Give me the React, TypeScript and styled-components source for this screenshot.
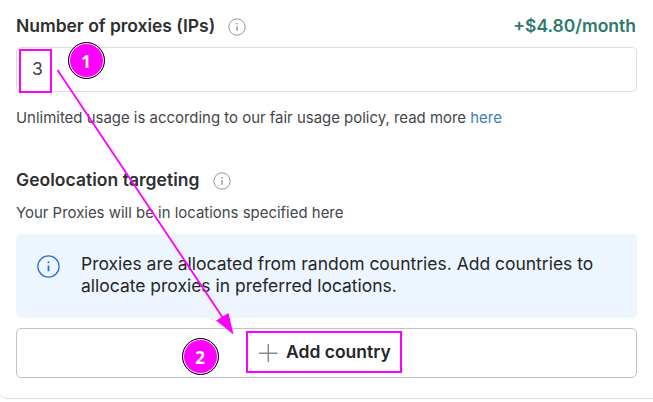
import React from "react";
import styled, { createGlobalStyle } from "styled-components";

const GlobalStyle = createGlobalStyle`
  *, *::before, *::after { box-sizing: border-box; }
  html, body { margin: 0; background: #fff; }
  body { font-family: Inter, "Liberation Sans", sans-serif; overflow: hidden; }
`;

const Page = styled.main`
  position: relative;
  width: 653px;
  height: 402px;
  overflow: hidden;
  background: #fff;
`;

const Card = styled.section`
  display: flex;
  flex-direction: column;
  width: 673px;
  height: 399px;
  margin-left: -1px;
  padding: 15px 36px 0 17px;
  border-bottom: 1px solid #dcdddf;
  border-radius: 0 0 8px 8px;
`;

const Header = styled.div`
  display: flex;
  align-items: center;
  height: 22px;
  gap: 13px;
`;

const Heading = styled.h2<{ $spacing: number }>`
  margin: 0;
  font-size: 17.5px;
  line-height: 22px;
  font-weight: 600;
  letter-spacing: ${(p) => p.$spacing}px;
  color: #2e2f31;
  white-space: nowrap;
`;

const Price = styled.span`
  margin-left: auto;
  font-size: 17.5px;
  line-height: 22px;
  font-weight: 600;
  color: #2d7a6b;
  white-space: nowrap;
`;

const NumberField = styled.input`
  display: block;
  width: 621px;
  height: 45px;
  margin: 10px 0 0;
  padding: 0 15px 3px;
  border: 1px solid #dddedf;
  border-radius: 5px;
  outline: none;
  background: #fff;
  color: #444649;
  font: 400 17.5px Inter, sans-serif;
`;

const Note = styled.p<{ $top: number }>`
  margin: ${(p) => p.$top}px 0 0;
  font-size: 14.94px;
  line-height: 20px;
  color: #444649;
  white-space: nowrap;
`;

const Link = styled.a`
  color: #427cbd;
  text-decoration: none;
`;

const Geolocation = styled.section`
  margin-top: 41px;
`;

const Alert = styled.div`
  display: flex;
  width: 621px;
  height: 84px;
  margin-top: 11px;
  padding: 20px 20px;
  gap: 20px;
  border-radius: 5px;
  background: #edf5ff;
`;

const AlertText = styled.p`
  margin: -1px 0 0;
  font-size: 17.48px;
  line-height: 22px;
  color: #242629;
  white-space: nowrap;
`;

const AddButton = styled.button`
  display: flex;
  align-items: center;
  width: 621px;
  height: 50px;
  margin-top: 10px;
  padding: 0 0 4px 241px;
  gap: 8px;
  border: 1px solid #c0c3cb;
  border-radius: 5px;
  background: #fff;
  color: #242629;
  font: 600 17.5px Inter, sans-serif;
  white-space: nowrap;
`;

const Annotations = styled.svg`
  position: absolute;
  inset: 0;
  pointer-events: none;
`;

const Marker = styled.span<{ $x: number; $y: number }>`
  position: absolute;
  left: ${(p) => p.$x}px;
  top: ${(p) => p.$y}px;
  display: flex;
  align-items: center;
  justify-content: center;
  width: 37px;
  height: 37px;
  padding-top: 1px;
  border: 1px solid #000;
  border-radius: 50%;
  background: #ff00ff;
  box-shadow: inset 0 0 0 1px #fff;
  color: #fff;
  font: 700 17px "Open Sans", sans-serif;
`;

const InfoSmall = styled.svg`
  flex: none;
  margin-top: 1px;
`;

const AlertIcon = styled.svg`
  flex: none;
`;

const PlusIcon = styled.svg`
  flex: none;
  margin-top: 4px;
`;

function Info() {
  return (
    <InfoSmall width="18" height="18" viewBox="0 0 18 18" fill="none">
      <circle cx="9" cy="9" r="8.2" stroke="#92979e" />
      <path d="M9 8.2v4.6" stroke="#85898f" strokeWidth="1.3" />
      <circle cx="9" cy="5.7" r=".8" fill="#85898f" />
    </InfoSmall>
  );
}

export default function App() {
  return (
    <Page>
      <GlobalStyle />
      <Card>
        <Header>
          <Heading $spacing={-0.035}>Number of proxies (IPs)</Heading>
          <Info />
          <Price>+$4.80/month</Price>
        </Header>
        <NumberField defaultValue="3" aria-label="Number of proxies" />
        <Note $top={16}>
          Unlimited usage is according to our fair usage policy, read more <Link href="#">here</Link>
        </Note>
        <Geolocation>
          <Header>
            <Heading $spacing={0.03}>Geolocation targeting</Heading>
            <Info />
          </Header>
          <Note $top={12}>Your Proxies will be in locations specified here</Note>
          <Alert>
            <AlertIcon width="25" height="25" viewBox="0 0 25 25" fill="none">
              <circle cx="12.5" cy="12.5" r="10.6" stroke="#2c6fdc" strokeWidth="1.3" />
              <path d="M12.5 11.5v5.8" stroke="#2c6fdc" strokeWidth="1.8" />
              <circle cx="12.5" cy="8.3" r="1" fill="#2c6fdc" />
            </AlertIcon>
            <AlertText>
              Proxies are allocated from random countries. Add countries to
              <br />
              allocate proxies in preferred locations.
            </AlertText>
          </Alert>
          <AddButton type="button">
            <PlusIcon width="20" height="20" viewBox="0 0 20 20">
              <path d="M10.3 1v18M1 10.3h18.5" stroke="#85898f" strokeWidth="1.5" />
            </PlusIcon>
            Add country
          </AddButton>
        </Geolocation>
      </Card>
      <Annotations width="653" height="402" viewBox="0 0 653 402" fill="none">
        <rect x="20" y="50" width="31" height="42" stroke="#f0f" strokeWidth="2" />
        <rect x="247" y="332" width="154" height="40" stroke="#f0f" strokeWidth="2" />
        <path d="M57.5 70L225 321" stroke="#f0f" strokeWidth="1.8" />
        <path d="M216 320.5L228.5 313L233.5 334.5Z" fill="#f0f" />
      </Annotations>
      <Marker $x={67.5} $y={42.3}>1</Marker>
      <Marker $x={181.5} $y={338.3}>2</Marker>
    </Page>
  );
}
